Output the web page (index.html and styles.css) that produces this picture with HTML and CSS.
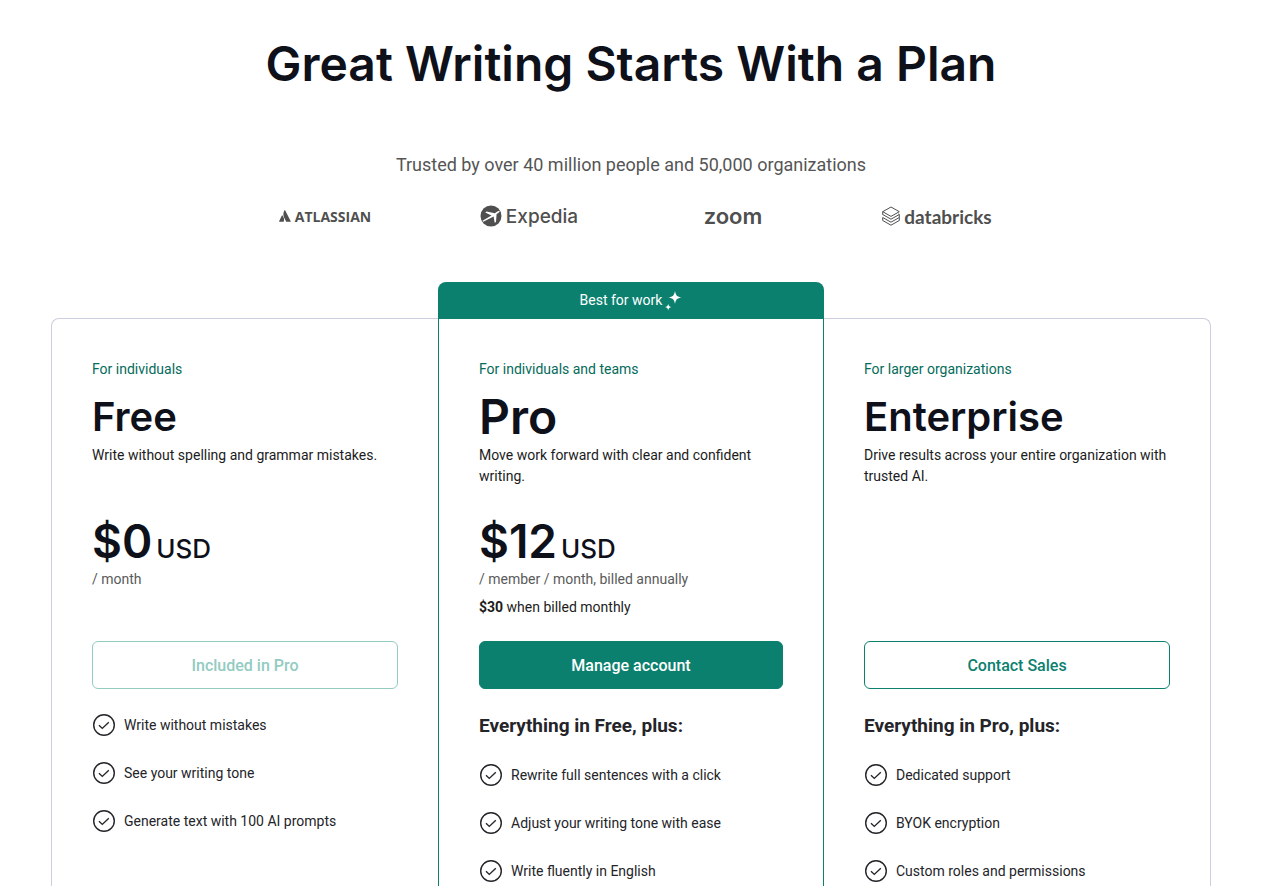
FILE: index.html
```html
<!DOCTYPE html>
<html lang="en">
<head>
    <meta charset="utf-8">
    <meta name="viewport" content="width=device-width, initial-scale=1">
    <title>Plans</title>
    <link rel="stylesheet" href="styles.css">
</head>
<body>
    <!-- shared check mark for the feature lists -->
    <svg class="sprite" aria-hidden="true">
        <symbol id="check" viewBox="0 0 24 24">
            <circle cx="12" cy="12" r="10.3" fill="none" stroke="currentColor" stroke-width="1.4"/>
            <path d="M7 12.2l3.300 3.200 6.500-6.200" fill="none" stroke="currentColor" stroke-width="1.4"/>
        </symbol>
    </svg>

    <header class="intro">
        <h1>Great Writing Starts With a Plan</h1>
        <p>Trusted by over 40 million people and 50,000 organizations</p>
        <ul class="logos">
            <li class="atlassian">
                <svg width="12" height="12" viewBox="0 0 12 12" fill="currentColor" aria-hidden="true">
                    <path d="M3.4 5.4c-.2-.2-.4-.2-.5.1L.1 11.3c-.1.3 0 .5.3.5h3.9c.2 0 .3-.1.4-.3.8-1.8.3-4.4-1.3-6.1z"/>
                    <path d="M5.5.3C4 2.800 4.100 5.500 5.100 7.500l2 4c.1.2.2.3.4.3h3.900c.3 0 .4-.2.3-.5L6.100.3C6-.1 5.700-.1 5.500.3z"/>
                </svg>
                <span>ATLASSIAN</span>
            </li>
            <li class="expedia">
                <svg width="22" height="22" viewBox="0 0 22 22" aria-hidden="true">
                    <circle cx="11" cy="11" r="10.500" fill="currentColor"/>
                    <path d="M2.500 15.800l9-5.300-6.300-3 1.300-.9 8.300 1.700 3-2c1.100-.7 2.200-.5 1.800.4-.2.5-.8.900-3 2.300l-.6 8-1.300.8-1.100-6.300-10.300 5.200z" fill="#fff"/>
                </svg>
                <span>Expedia</span>
            </li>
            <li class="zoom"><span>zoom</span></li>
            <li class="databricks">
                <svg width="18" height="20" viewBox="0 0 18 20" fill="none" stroke="currentColor" aria-hidden="true">
                    <path d="M.7 5.700L9 1l8.300 4.700L9 10.400z"/>
                    <path d="M.7 5.700v2.800L9 13.200l8.300-4.700v3L9 16.200.7 11.500v3L9 19.200l8.300-4.700v-3M.7 8.500v-.3M17.300 8.500l-1-.6"/>
                </svg>
                <span>databricks</span>
            </li>
        </ul>
    </header>

    <main class="plans">
        <section class="plan">
            <p class="audience">For individuals</p>
            <h2>Free</h2>
            <p class="summary">Write without spelling and grammar mistakes.</p>
            <div class="pricing">
                <p class="price">$0 <span>USD</span></p>
                <p class="period">/ month</p>
            </div>
            <button type="button" class="btn" disabled>Included in Pro</button>
            <ul class="features">
                <li><svg><use href="#check"/></svg>Write without mistakes</li>
                <li><svg><use href="#check"/></svg>See your writing tone</li>
                <li><svg><use href="#check"/></svg>Generate text with 100 AI prompts</li>
            </ul>
        </section>

        <section class="plan plan-pro">
            <div class="banner">
                Best for work
                <svg width="17" height="20" viewBox="0 0 17 20" fill="#fff" aria-hidden="true">
                    <path d="M10 0c.9 4.600 1.800 5.600 6.700 6.500C11.800 7.400 10.900 8.400 10 13c-.9-4.600-1.800-5.600-6.700-6.500C8.200 5.600 9.100 4.600 10 0z"/>
                    <path d="M3.200 12.800c.5 2.300 1 2.800 3.200 3.300-2.200.5-2.700 1-3.200 3.300-.5-2.300-1-2.800-3.200-3.300 2.200-.5 2.700-1 3.200-3.300z"/>
                </svg>
            </div>
            <p class="audience">For individuals and teams</p>
            <h2>Pro</h2>
            <p class="summary">Move work forward with clear and confident writing.</p>
            <div class="pricing">
                <p class="price">$12 <span>USD</span></p>
                <p class="period">/ member / month, billed annually</p>
                <p class="monthly"><strong>$30</strong> when billed monthly</p>
            </div>
            <button type="button" class="btn btn-primary">Manage account</button>
            <h3>Everything in Free, plus:</h3>
            <ul class="features">
                <li><svg><use href="#check"/></svg>Rewrite full sentences with a click</li>
                <li><svg><use href="#check"/></svg>Adjust your writing tone with ease</li>
                <li><svg><use href="#check"/></svg>Write fluently in English</li>
            </ul>
        </section>

        <section class="plan">
            <p class="audience">For larger organizations</p>
            <h2>Enterprise</h2>
            <p class="summary">Drive results across your entire organization with trusted AI.</p>
            <div class="pricing"></div>
            <button type="button" class="btn">Contact Sales</button>
            <h3>Everything in Pro, plus:</h3>
            <ul class="features">
                <li><svg><use href="#check"/></svg>Dedicated support</li>
                <li><svg><use href="#check"/></svg>BYOK encryption</li>
                <li><svg><use href="#check"/></svg>Custom roles and permissions</li>
            </ul>
        </section>
    </main>
</body>
</html>
```
FILE: styles.css
```css
* {
    box-sizing: border-box;
}

body {
    display: flex;
    flex-direction: column;
    min-height: 100vh;
    margin: 0;
    padding: 36px 56px 0 51px;
    font-family: Roboto, "Liberation Sans", sans-serif;
    font-size: 14px;
    line-height: 21px;
    color: #1c1c1c;
    background: #fff;
}

h1, h2, h3, p, ul {
    margin: 0;
    padding: 0;
}

ul {
    list-style: none;
}

.sprite {
    position: absolute;
    width: 0;
    height: 0;
}

/* Heading and customer logos */
.intro {
    text-align: center;
}

.intro h1 {
    font-family: Inter, sans-serif;
    font-size: 48px;
    font-weight: 600;
    line-height: 56px;
    color: #0e101a;
}

.intro p {
    margin-top: 60px;
    font-size: 18px;
    line-height: 26px;
    color: #555;
}

.logos {
    display: grid;
    grid-template-columns: repeat(4, 1fr);
    max-width: 816px;
    margin: 26px auto 0;
    color: #4f4f4f;
}

.logos li {
    display: flex;
    align-items: center;
    justify-content: center;
    gap: 4px;
    height: 24px;
}

.atlassian {
    font: 700 14px "Open Sans", sans-serif;
}

.expedia {
    font: 500 19px Inter, sans-serif;
}

.zoom {
    font: 600 22px Inter, sans-serif;
}

.databricks {
    font: 700 19px Lato, sans-serif;
}

/* Plans */
.plans {
    flex: 1;
    display: grid;
    grid-template-columns: repeat(3, 1fr);
    margin-top: 90px;
    border: 1px solid #cdcee0;
    border-bottom: 0;
    border-radius: 8px 8px 0 0;
}

.plan {
    position: relative;
    padding: 40px 40px 0;
}

.plan-pro {
    border: solid #0b806f;
    border-width: 0 1px;
}

.banner {
    position: absolute;
    left: -1px;
    right: -1px;
    bottom: 100%;
    display: flex;
    align-items: center;
    justify-content: center;
    gap: 3px;
    height: 37px;
    color: #fff;
    background: #0b806f;
    border-radius: 8px 8px 0 0;
}

.audience {
    line-height: 20px;
    color: #056b5b;
}

.plan h2 {
    margin-top: 10px;
    font-family: Inter, sans-serif;
    font-size: 40px;
    font-weight: 600;
    line-height: 56px;
    color: #0e101a;
}

.plan-pro h2 {
    font-size: 48px;
}

.summary {
    min-height: 42px;
}

.pricing {
    min-height: 130px;
    margin-top: 24px;
}

.price {
    display: flex;
    align-items: baseline;
    gap: 4px;
    height: 58px;
    font-family: Inter, sans-serif;
    font-size: 46px;
    font-weight: 600;
    line-height: 60px;
    color: #0e101a;
}

.price span {
    font-size: 26px;
    font-weight: 500;
    line-height: 32px;
}

.period {
    line-height: 20px;
    color: #5a5a5a;
}

.monthly {
    margin-top: 8px;
}

.btn {
    display: block;
    width: 100%;
    height: 48px;
    font: 500 16px Roboto, sans-serif;
    color: #0b806f;
    background: #fff;
    border: 1px solid #0b806f;
    border-radius: 6px;
    cursor: pointer;
}

.btn:disabled {
    color: #93cbc1;
    border-color: #93cbc1;
    cursor: default;
}

.btn-primary {
    color: #fff;
    background: #0b806f;
}

.plan h3 {
    margin-top: 24px;
    font-size: 19px;
    font-weight: 700;
    line-height: 26px;
    color: #242429;
}

.features {
    display: flex;
    flex-direction: column;
    gap: 24px;
    margin-top: 24px;
    color: #242429;
}

.features li {
    display: flex;
    align-items: center;
    gap: 8px;
    line-height: 24px;
}

.features svg {
    width: 24px;
    height: 24px;
}
```
